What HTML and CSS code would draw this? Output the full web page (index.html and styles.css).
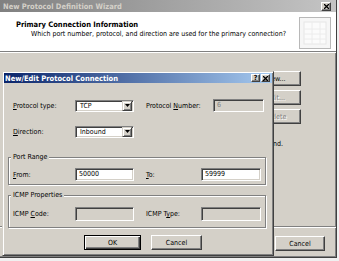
FILE: index.html
```html
<!DOCTYPE html>
<html lang="en">
<head>
    <meta charset="UTF-8">
    <title>New Protocol Definition Wizard</title>
    <link rel="stylesheet" href="styles.css">
</head>
<body>
    <div class="wizard">
        <div class="titlebar inactive">
            <span class="title-text">New Protocol Definition Wizard</span>
            <span class="caption-btn">
                <svg width="5" height="5" viewBox="0 0 5 5"><path d="M0 0L5 5M5 0L0 5" stroke="#000" stroke-width="1.3"/></svg>
            </span>
        </div>

        <div class="wizard-header">
            <div class="header-text">
                <div class="header-title">Primary Connection Information</div>
                <div class="header-sub">Which port number, protocol, and direction are used for the primary connection?</div>
            </div>
            <div class="header-icon">
                <svg width="30" height="30" viewBox="0 0 30 30">
                    <rect x="4" y="4" width="22" height="22" fill="#fbfbfb" stroke="#e6e6e6"/>
                    <path d="M4 11H26M4 16H26M4 21H26M12 4V26M20 4V26" stroke="#ececec"/>
                </svg>
            </div>
        </div>

        <div class="wizard-body">
            <div class="body-top">
                <div class="side-buttons">
                    <button class="btn">New...</button>
                    <button class="btn" disabled>Edit...</button>
                    <button class="btn" disabled>Delete</button>
                </div>
            </div>
            <p class="body-note">To change a connection, select it and click Edit, or click Delete to remove it and.</p>
            <div class="wizard-footer">
                <button class="btn btn-cancel">Cancel</button>
            </div>
        </div>

        <div class="dialog">
            <div class="titlebar active">
                <span class="title-text">New/Edit Protocol Connection</span>
                <span class="caption-group">
                    <span class="caption-btn help">?</span>
                    <span class="caption-btn">
                        <svg width="5" height="5" viewBox="0 0 5 5"><path d="M0 0L5 5M5 0L0 5" stroke="#000" stroke-width="1.3"/></svg>
                    </span>
                </span>
            </div>

            <div class="dialog-body">
                <div class="form-row first">
                    <label class="lbl"><u>P</u>rotocol type:</label>
                    <div class="combo field">
                        <span class="combo-value">TCP</span>
                        <span class="combo-btn"><svg width="5" height="3" viewBox="0 0 5 3"><path d="M0 0H5L2.5 3Z" fill="#000"/></svg></span>
                    </div>
                    <label class="lbl lbl-right">Protocol <u>N</u>umber:</label>
                    <div class="field input disabled num">6</div>
                </div>

                <div class="form-row second">
                    <label class="lbl"><u>D</u>irection:</label>
                    <div class="combo field">
                        <span class="combo-value">Inbound</span>
                        <span class="combo-btn"><svg width="5" height="3" viewBox="0 0 5 3"><path d="M0 0H5L2.5 3Z" fill="#000"/></svg></span>
                    </div>
                </div>

                <div class="group port-group">
                    <span class="group-title">Port Range</span>
                    <div class="form-row">
                        <label class="lbl"><u>F</u>rom:</label>
                        <div class="field input">50000</div>
                        <label class="lbl lbl-to"><u>T</u>o:</label>
                        <div class="field input wide">59999</div>
                    </div>
                </div>

                <div class="group icmp-group">
                    <span class="group-title">ICMP Properties</span>
                    <div class="form-row">
                        <label class="lbl">ICMP <u>C</u>ode:</label>
                        <div class="field input disabled"></div>
                        <label class="lbl lbl-to">ICMP T<u>y</u>pe:</label>
                        <div class="field input wide disabled"></div>
                    </div>
                </div>

                <div class="dialog-buttons">
                    <button class="btn btn-default">OK</button>
                    <button class="btn btn-dlg-cancel">Cancel</button>
                </div>
            </div>
        </div>
    </div>
</body>
</html>
```

FILE: styles.css
```css
body {
    margin: 0;
    background: #f0f0f0;
    font-family: "DejaVu Sans Condensed", "Liberation Sans", sans-serif;
    font-size: 7px;
    color: #000;
}
.wizard {
    position: relative;
    box-sizing: border-box;
    width: 337px;
    height: 258px;
    background: #d4d0c8;
    border-right: 1px solid #404040;
    border-bottom: 1px solid #404040;
    box-shadow: inset -1px -1px #808080;
    display: flex;
    flex-direction: column;
}

/* title bars */
.titlebar {
    box-sizing: border-box;
    height: 12px;
    display: flex;
    align-items: center;
    justify-content: space-between;
    padding: 0 5px 0 3px;
    font-weight: bold;
    font-size: 7.5px;
}
.titlebar.inactive {
    background: linear-gradient(to right, #808080, #c4c4c4);
    color: #d4d0c8;
}
.titlebar.active {
    height: 10px;
    padding: 0 2px 0 1px;
    background: linear-gradient(to right, #0a246a, #a6caf0);
    color: #fff;
}
.caption-group {
    display: flex;
    gap: 1px;
}
.caption-btn {
    box-sizing: border-box;
    width: 10px;
    height: 9px;
    display: flex;
    align-items: center;
    justify-content: center;
    background: #d4d0c8;
    border: 1px solid;
    border-color: #fff #404040 #404040 #fff;
    box-shadow: inset -1px -1px #808080;
    color: #000;
    font-size: 7px;
}
.active .caption-btn {
    width: 9px;
    height: 8px;
}

/* wizard header */
.wizard-header {
    height: 39px;
    background: #fff;
    border-bottom: 1px solid #808080;
    display: flex;
    justify-content: space-between;
    padding: 0 5px 0 16px;
}
.header-text {
    padding-top: 8px;
}
.header-title {
    font-weight: bold;
    font-size: 7.5px;
    line-height: 9px;
}
.header-sub {
    padding-left: 15px;
    line-height: 9px;
    margin-top: 1px;
}
.header-icon {
    margin-top: 5px;
    box-sizing: border-box;
    width: 32px;
    height: 32px;
    border: 1px solid #b8b8b8;
    background: #f6f6f6;
}

/* wizard body */
.wizard-body {
    flex: 1;
    display: flex;
    flex-direction: column;
    border-top: 1px solid #fff;
}
.body-top {
    display: flex;
    justify-content: flex-end;
    padding: 18px 35px 0 0;
}
.side-buttons {
    display: flex;
    flex-direction: column;
    gap: 4px;
}
.side-buttons .btn {
    width: 50px;
}
.body-note {
    margin: 16px 0 0;
    padding-right: 53px;
    line-height: 9px;
    text-align: right;
    white-space: nowrap;
    overflow: hidden;
}
.wizard-footer {
    margin-top: auto;
    display: flex;
    justify-content: flex-end;
    padding: 9px 11px 6px 0;
    border-top: 1px solid #808080;
    box-shadow: inset 0 1px #fff;
}
.wizard-footer .btn {
    width: 50px;
}

/* buttons */
.btn {
    box-sizing: border-box;
    height: 15px;
    padding: 0;
    background: #d4d0c8;
    border: 1px solid;
    border-color: #fff #404040 #404040 #fff;
    box-shadow: inset -1px -1px #808080;
    font-family: inherit;
    font-size: 7px;
    color: #000;
}
.btn:disabled {
    color: #808080;
    text-shadow: 1px 1px #fff;
}
.btn-default {
    border-color: #000;
    box-shadow: inset 1px 1px #fff, inset -1px -1px #404040, inset -2px -2px #808080;
}

/* dialog */
.dialog {
    position: absolute;
    left: 2px;
    top: 71px;
    box-sizing: border-box;
    width: 272px;
    height: 185px;
    padding: 1px;
    background: #d4d0c8;
    border: 1px solid;
    border-color: #d4d0c8 #404040 #404040 #d4d0c8;
    box-shadow: inset 1px 1px #fff, inset -1px -1px #808080;
}
.dialog-body {
    padding: 16px 0 0 4px;
}
.form-row {
    display: flex;
    align-items: center;
    height: 13px;
    padding-left: 5px;
}
.form-row.second {
    margin-top: 13px;
}
.lbl {
    width: 62px;
}
.lbl-right {
    margin-left: 12px;
    width: 67px;
}
.lbl-to {
    margin-left: 12px;
    width: 55px;
}
.field {
    box-sizing: border-box;
    border: 1px solid;
    border-color: #808080 #fff #fff #808080;
    box-shadow: inset 1px 1px #404040, inset -1px -1px #d4d0c8;
    background: #fff;
}
.combo {
    width: 59px;
    height: 12px;
    display: flex;
    align-items: center;
    justify-content: space-between;
    padding: 1px;
}
.combo-value {
    padding-left: 3px;
}
.combo-btn {
    box-sizing: border-box;
    width: 10px;
    height: 10px;
    display: flex;
    align-items: center;
    justify-content: center;
    background: #d4d0c8;
    border: 1px solid;
    border-color: #d4d0c8 #404040 #404040 #d4d0c8;
    box-shadow: inset 1px 1px #fff, inset -1px -1px #808080;
}
.input {
    width: 59px;
    height: 13px;
    padding-left: 3px;
    line-height: 11px;
}
.input.wide {
    width: 60px;
}
.input.num {
    width: 51px;
}
.input.disabled {
    background: #d4d0c8;
    color: #808080;
}

/* group boxes */
.group {
    width: 258px;
    box-sizing: border-box;
    border: 1px solid #808080;
    box-shadow: inset 1px 1px #fff, 1px 1px #fff;
    padding-left: 4px;
}
.group .form-row {
    padding-left: 0;
}
.port-group {
    margin-top: 19px;
    height: 28px;
}
.port-group .form-row {
    margin-top: 2px;
}
.icmp-group {
    margin-top: 10px;
    height: 33px;
}
.icmp-group .form-row {
    margin-top: 3px;
    height: 14px;
}
.icmp-group .input {
    height: 14px;
}
.group-title {
    display: inline-block;
    margin: -5px 0 0 -2px;
    padding: 0 2px;
    line-height: 9px;
    background: #d4d0c8;
    vertical-align: top;
}
.dialog-buttons {
    display: flex;
    gap: 10px;
    margin-top: 7px;
    padding-left: 76px;
}
.dialog-buttons .btn-default {
    width: 57px;
}
.btn-dlg-cancel {
    width: 51px;
}
```
